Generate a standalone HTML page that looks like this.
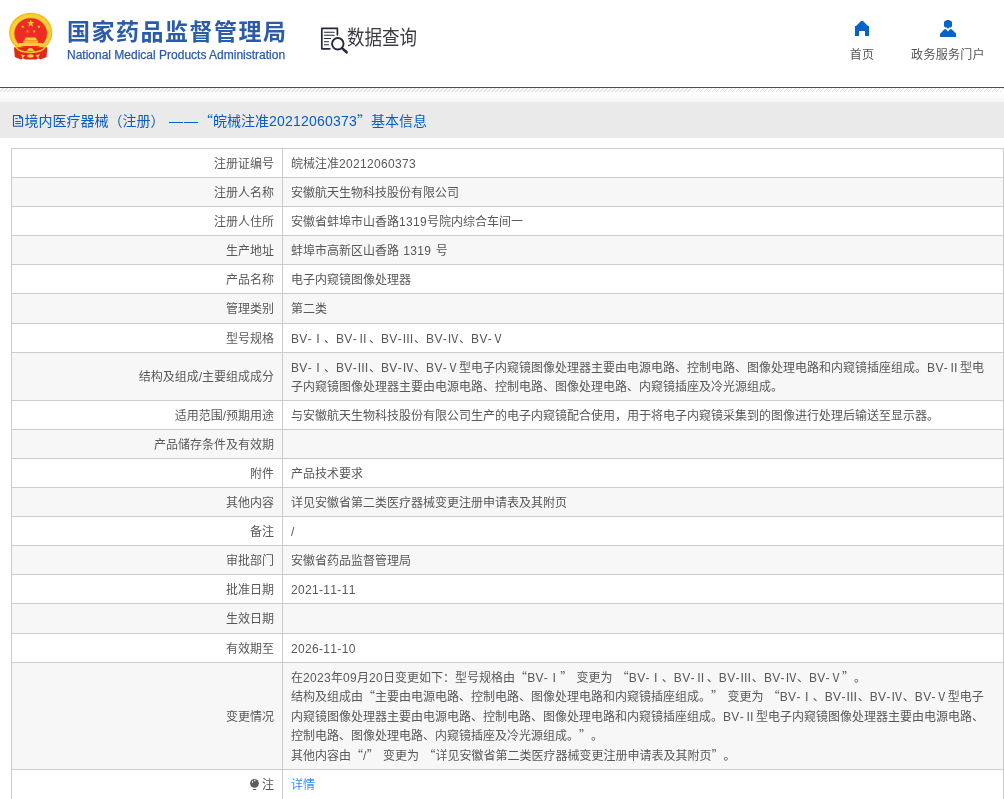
<!DOCTYPE html>
<html lang="zh-CN">
<head>
<meta charset="utf-8">
<title>国家药品监督管理局 数据查询</title>
<style>
html,body{margin:0;padding:0;background:#fff;}
body{width:1004px;height:799px;overflow:hidden;position:relative;
  font-family:"Liberation Sans","Noto Sans CJK SC",sans-serif;font-size:12px;color:#58585c;text-spacing-trim:space-all;}
.l{font-family:"Liberation Sans","Noto Sans CJK SC",sans-serif;letter-spacing:0.33px;line-height:12px;font-kerning:none;}
.r{display:inline-block;width:12px;text-align:center;line-height:12px;}
.q{font-family:"Noto Sans CJK SC","Liberation Sans",sans-serif;line-height:12px;}
/* ---------- header ---------- */
#hd{will-change:transform;position:absolute;left:0;top:0;width:1004px;height:87px;background:#fff;}
#emblem{position:absolute;left:4px;top:8px;}
#cn{position:absolute;left:67px;top:15px;height:34px;line-height:34px;white-space:nowrap;
  font-size:23px;font-weight:bold;color:#2a5caa;letter-spacing:1.5px;}
#en{position:absolute;left:67px;top:47px;height:16px;line-height:16px;white-space:nowrap;
  font-size:12px;color:#2a5caa;-webkit-text-stroke:0.25px #2a5caa;}
#sico{position:absolute;left:315px;top:20px;}
#stitle{position:absolute;left:347px;top:23.5px;height:28px;line-height:28px;white-space:nowrap;
  font-size:20.5px;color:#3c3c46;transform:scaleX(.855);transform-origin:0 50%;}
.nav{position:absolute;top:47px;letter-spacing:0.3px;height:16px;line-height:16px;white-space:nowrap;color:#555;font-size:12px;text-align:center;}
.nico{position:absolute;}
#line{position:absolute;left:0;top:87px;width:1004px;height:1px;background:#0b5cbf;}
#hatch{position:absolute;left:0;top:88px;width:1004px;height:4px;
  background:repeating-linear-gradient(135deg,#fff 0,#fff 1.85px,#e3e3e3 1.85px,#e3e3e3 2.83px);}
#fade{position:absolute;left:0;top:92px;width:1004px;height:10px;background:linear-gradient(#fff,#f6f6f6);}
#bar{will-change:transform;position:absolute;left:0;top:102px;width:1004px;height:35px;background:#eaeaea;border-bottom:1px solid #e8ebf3;}
#bar h1{position:absolute;left:12px;top:9px;margin:0;height:20px;line-height:20px;white-space:nowrap;
  font-size:14px;font-weight:normal;color:#0a5cc2;}
#bar h1 .l{letter-spacing:0.22px;}
#bar h1 .d{display:inline-block;padding-left:4.5px;letter-spacing:1px;}
/* ---------- table ---------- */
table{will-change:transform;position:absolute;left:11px;top:148px;width:993px;border-collapse:collapse;table-layout:fixed;}
td{border:1px solid #cdcbcc;padding:3px 8px 0 8px;line-height:19.5px;vertical-align:middle;white-space:nowrap;overflow:hidden;}
td.k{width:254px;text-align:right;padding-right:8px;}
td.v{text-align:left;padding-left:8px;word-spacing:1px;}
tr.g td{background:#f7f7f7;}
tr.last td{vertical-align:top;padding-top:5.75px;}
a{color:#2e8fff;text-decoration:none;}
</style>
</head>
<body>
<div id="hd">
  <svg id="emblem" viewBox="4 8 56 58" width="56" height="58">
    <ellipse cx="30.7" cy="32.7" rx="21.6" ry="20" fill="#f4bc16"/>
    <ellipse cx="30.7" cy="32.7" rx="20" ry="18.5" fill="#f8cf3c"/>
    <ellipse cx="30.7" cy="33.4" rx="16.9" ry="16" fill="#eeb31a"/>
    <ellipse cx="30.7" cy="33.5" rx="16.2" ry="15.3" fill="#ee2b24"/>
    <path d="M14 47.2 H47.2 L46.6 57 L40.4 59.6 L38.6 58.3 L36 59.4 H25.4 L22.8 58.3 L21 59.6 L14.8 57 Z" fill="#e2271f"/>
    <polygon points="30.70,19.40 31.66,21.97 34.41,22.09 32.26,23.81 32.99,26.46 30.70,24.94 28.41,26.46 29.14,23.81 26.99,22.09 29.74,21.97" fill="#f9d423"/>
    <polygon points="22.70,25.00 23.12,26.12 24.32,26.17 23.38,26.92 23.70,28.08 22.70,27.41 21.70,28.08 22.02,26.92 21.08,26.17 22.28,26.12" fill="#f9d423"/>
    <polygon points="38.90,25.00 39.32,26.12 40.52,26.17 39.58,26.92 39.90,28.08 38.90,27.41 37.90,28.08 38.22,26.92 37.28,26.17 38.48,26.12" fill="#f9d423"/>
    <polygon points="27.50,29.70 27.92,30.82 29.12,30.87 28.18,31.62 28.50,32.78 27.50,32.11 26.50,32.78 26.82,31.62 25.88,30.87 27.08,30.82" fill="#f9d423"/>
    <polygon points="34.10,29.70 34.52,30.82 35.72,30.87 34.78,31.62 35.10,32.78 34.10,32.11 33.10,32.78 33.42,31.62 32.48,30.87 33.68,30.82" fill="#f9d423"/>
    <path d="M25.6 37.4 h10.2 l1.4 3.2 h-13 Z" fill="#f7cf3a"/>
    <rect x="23.2" y="40.6" width="15" height="2.3" fill="#f2bd28"/>
    <path d="M19.2 42.9 h23 l1.6 3 h-26.2 Z" fill="#f7cf3a"/>
    <path d="M15.6 46.6 C18.4 51.4 24.6 52.4 30.5 52.4 C36.4 52.4 42.6 51.4 45.4 46.6" fill="none" stroke="#f6c21a" stroke-width="1.7"/>
    <path d="M26.4 52 L29.4 49.2 H31.6 L34.6 52" fill="none" stroke="#f6c21a" stroke-width="1.5"/>
    <ellipse cx="30.5" cy="49.4" rx="2.6" ry="1.5" fill="#f8cf3c"/>
    <ellipse cx="30.4" cy="55.9" rx="3.3" ry="1.7" fill="#f8cf3c"/>
    <path d="M20.6 54.3 L25 55.2 L22.6 58.3 Z M40 54.3 L35.6 55.2 L38 58.3 Z" fill="#f8cf3c"/>
  </svg>
  <div id="cn">国家药品监督管理局</div>
  <div id="en">National Medical Products Administration</div>
  <svg id="sico" viewBox="315 20 40 40" width="40" height="40">
    <g fill="none" stroke="#28283c" stroke-linecap="round" stroke-linejoin="round">
      <path d="M329.8 48.8 H321.8 V28.4 H337.4 V34.8" stroke-width="1.7"/>
      <path d="M324.4 32.3 H334.2 M324.4 35.3 H334.2 M324.4 38.5 H330.6 M324.4 41.7 H328.6 M324.4 44.8 H328.6" stroke-width="1.1"/>
      <circle cx="337.8" cy="43.8" r="5.75" stroke-width="1.9" fill="#fff"/>
      <path d="M342.3 48.4 L346.6 52.3" stroke-width="2.6"/>
    </g>
  </svg>
  <div id="stitle">数据查询</div>
  <svg class="nico" viewBox="846 14 32 28" width="32" height="28" style="left:846px;top:14px"><path d="M861 21 h2 l5 5 h1 v10 h-4 v-5 h-6 v5 h-4 v-10 h1 Z" fill="#0563c9"/></svg>
  <svg class="nico" viewBox="932 14 32 28" width="32" height="28" style="left:932px;top:14px"><path d="M947 20 h2 l2 1 l1 1 v4 l-1 1.6 h-2 l-1 1.4 l-1 -1.4 h-2 l-1 -1.6 v-4 l1 -1 Z" fill="#0563c9"/><path d="M940 37 v-3 l4.3 -4.8 h1.8 l1.9 2.2 l1.9 -2.2 h1.8 l4.3 4.3 v3.5 Z" fill="#0563c9"/></svg>
  <div class="nav" style="left:838px;width:48px;">首页</div>
  <div class="nav" style="left:900px;width:96px;">政务服务门户</div>
</div>
<div id="line"></div><div id="hatch"></div><div id="fade"></div>
<div id="bar"><h1><svg viewBox="12 114 12 14" width="12" height="14" style="vertical-align:-2px;margin-right:0.5px"><g fill="none" stroke="#0a5cc2" stroke-width="1.1"><path d="M13.5 115.5 H19.6 L22.5 118 V126.3 H13.5 Z"/><path d="M19.6 115.5 V118 H22.5"/><path d="M15.3 118.6 H17.8 M15.3 121.5 H20.8 M15.3 123.6 H20.8" stroke-width="1"/></g></svg>境内医疗器械（注册）<span class="d">——</span><span class="q">“</span>皖械注准<span class="l">20212060373</span><span class="q">”</span>基本信息</h1></div>
<table>
<tr style="height:29px"><td class="k">注册证编号</td><td class="v">皖械注准<span class="l">20212060373</span></td></tr>
<tr class="g" style="height:29px"><td class="k">注册人名称</td><td class="v">安徽航天生物科技股份有限公司</td></tr>
<tr style="height:29px"><td class="k">注册人住所</td><td class="v">安徽省蚌埠市山香路<span class="l">1319</span>号院内综合车间一</td></tr>
<tr class="g" style="height:29px"><td class="k">生产地址</td><td class="v">蚌埠市高新区山香路 <span class="l">1319</span> 号</td></tr>
<tr style="height:29px"><td class="k">产品名称</td><td class="v">电子内窥镜图像处理器</td></tr>
<tr class="g" style="height:30px"><td class="k">管理类别</td><td class="v">第二类</td></tr>
<tr style="height:29px"><td class="k">型号规格</td><td class="v"><span class="l">BV-</span><span class="r">Ⅰ</span>、<span class="l">BV-</span><span class="r">Ⅱ</span>、<span class="l">BV-</span><span class="r">Ⅲ</span>、<span class="l">BV-</span><span class="r">Ⅳ</span>、<span class="l">BV-</span><span class="r">Ⅴ</span></td></tr>
<tr class="g" style="height:48px"><td class="k">结构及组成/主要组成成分</td><td class="v"><span class="l">BV-</span><span class="r">Ⅰ</span>、<span class="l">BV-</span><span class="r">Ⅲ</span>、<span class="l">BV-</span><span class="r">Ⅳ</span>、<span class="l">BV-</span><span class="r">Ⅴ</span>型电子内窥镜图像处理器主要由电源电路、控制电路、图像处理电路和内窥镜插座组成。<span class="l">BV-</span><span class="r">Ⅱ</span>型电<br>子内窥镜图像处理器主要由电源电路、控制电路、图像处理电路、内窥镜插座及冷光源组成。</td></tr>
<tr style="height:29px"><td class="k">适用范围/预期用途</td><td class="v">与安徽航天生物科技股份有限公司生产的电子内窥镜配合使用，用于将电子内窥镜采集到的图像进行处理后输送至显示器。</td></tr>
<tr class="g" style="height:29px"><td class="k">产品储存条件及有效期</td><td class="v"></td></tr>
<tr style="height:29px"><td class="k">附件</td><td class="v">产品技术要求</td></tr>
<tr class="g" style="height:29px"><td class="k">其他内容</td><td class="v">详见安徽省第二类医疗器械变更注册申请表及其附页</td></tr>
<tr style="height:29px"><td class="k">备注</td><td class="v"><span class="l">/</span></td></tr>
<tr class="g" style="height:29px"><td class="k">审批部门</td><td class="v">安徽省药品监督管理局</td></tr>
<tr style="height:29px"><td class="k">批准日期</td><td class="v"><span class="l">2021-11-11</span></td></tr>
<tr class="g" style="height:30px"><td class="k">生效日期</td><td class="v"></td></tr>
<tr style="height:29px"><td class="k">有效期至</td><td class="v"><span class="l">2026-11-10</span></td></tr>
<tr class="g" style="height:107px"><td class="k">变更情况</td><td class="v">在<span class="l">2023</span>年<span class="l">09</span>月<span class="l">20</span>日变更如下：型号规格由<span class="q">“</span><span class="l">BV-</span><span class="r">Ⅰ</span><span class="q">”</span> 变更为 <span class="q">“</span><span class="l">BV-</span><span class="r">Ⅰ</span>、<span class="l">BV-</span><span class="r">Ⅱ</span>、<span class="l">BV-</span><span class="r">Ⅲ</span>、<span class="l">BV-</span><span class="r">Ⅳ</span>、<span class="l">BV-</span><span class="r">Ⅴ</span><span class="q">”</span>。<br>结构及组成由<span class="q">“</span>主要由电源电路、控制电路、图像处理电路和内窥镜插座组成。<span class="q">”</span> 变更为 <span class="q">“</span><span class="l">BV-</span><span class="r">Ⅰ</span>、<span class="l">BV-</span><span class="r">Ⅲ</span>、<span class="l">BV-</span><span class="r">Ⅳ</span>、<span class="l">BV-</span><span class="r">Ⅴ</span>型电子<br>内窥镜图像处理器主要由电源电路、控制电路、图像处理电路和内窥镜插座组成。<span class="l">BV-</span><span class="r">Ⅱ</span>型电子内窥镜图像处理器主要由电源电路、<br>控制电路、图像处理电路、内窥镜插座及冷光源组成。<span class="q">”</span>。<br>其他内容由<span class="q">“</span><span class="l">/</span><span class="q">”</span> 变更为 <span class="q">“</span>详见安徽省第二类医疗器械变更注册申请表及其附页<span class="q">”</span>。</td></tr>
<tr class="last" style="height:44px"><td class="k"><svg viewBox="249 778 11 13" width="11" height="13" style="vertical-align:-2px;margin-right:1.5px"><circle cx="254.5" cy="783.3" r="4.4" fill="#5c5d62"/><circle cx="254.7" cy="780.5" r="0.8" fill="#fff"/><ellipse cx="252.5" cy="782" rx="0.6" ry="1" fill="#fff"/><rect x="253" y="789" width="3.2" height="1" fill="#5c5d62"/></svg>注</td><td class="v"><a>详情</a></td></tr>
</table>
</body>
</html>
